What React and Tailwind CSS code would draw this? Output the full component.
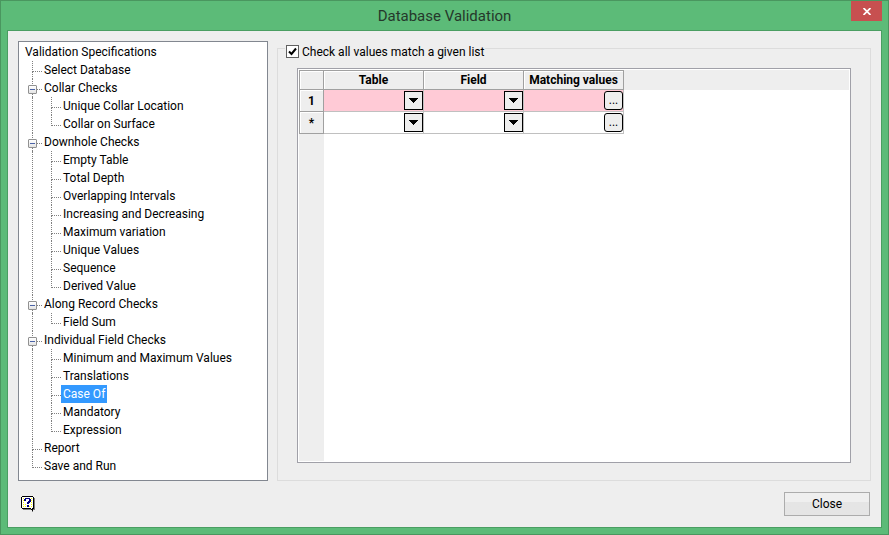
import React, { useState } from 'react';

const TREE = [
  { label: 'Select Database' },
  { label: 'Collar Checks', children: ['Unique Collar Location', 'Collar on Surface'] },
  {
    label: 'Downhole Checks',
    children: [
      'Empty Table',
      'Total Depth',
      'Overlapping Intervals',
      'Increasing and Decreasing',
      'Maximum variation',
      'Unique Values',
      'Sequence',
      'Derived Value',
    ],
  },
  { label: 'Along Record Checks', children: ['Field Sum'] },
  {
    label: 'Individual Field Checks',
    children: [
      'Minimum and Maximum Values',
      'Translations',
      'Case Of',
      'Mandatory',
      'Expression',
    ],
  },
  { label: 'Report' },
  { label: 'Save and Run' },
];

const ROWS = [
  { id: '1', required: true },
  { id: '*', required: false },
];

// Dotted elbow that joins a row to the line of its parent
function Branch({ last, children }) {
  return (
    <span className="relative flex w-[17px] shrink-0 flex-col pl-[7px]">
      <span className="h-[11px] border-b border-l border-dotted border-[#808080]" />
      <span className={`flex-1 ${last ? '' : 'border-l border-dotted border-[#808080]'}`} />
      {children}
    </span>
  );
}

function Toggle({ label, onClick }) {
  return (
    <button
      type="button"
      aria-label={`Toggle ${label}`}
      onClick={onClick}
      className="absolute left-[3px] top-[6px] flex h-[9px] w-[9px] items-center justify-center rounded-[1px] border border-[#919191] bg-linear-to-b from-white to-[#e4e4e4]"
    >
      <span className="h-px w-[5px] bg-[#4b63a7]" />
    </button>
  );
}

function Label({ text, selected, onSelect }) {
  return (
    <button
      type="button"
      onClick={() => onSelect(text)}
      className={`h-[18px] whitespace-nowrap px-[2px] leading-[18px] ${selected === text ? 'bg-[#3399ff] text-white' : ''}`}
    >
      {text}
    </button>
  );
}

function SpecTree() {
  const [selected, setSelected] = useState('Case Of');
  const [closed, setClosed] = useState({});

  return (
    <nav className="w-[250px] shrink-0 border border-[#828790] bg-white pb-1 pl-[6px] pt-px">
      <div className="h-[18px] leading-[18px]">Validation Specifications</div>
      <ul>
        {TREE.map((node, i) => (
          <li key={node.label}>
            <div className="flex h-[18px]">
              <Branch last={i === TREE.length - 1}>
                {node.children && (
                  <Toggle
                    label={node.label}
                    onClick={() => setClosed(prev => ({ ...prev, [node.label]: !prev[node.label] }))}
                  />
                )}
              </Branch>
              <Label text={node.label} selected={selected} onSelect={setSelected} />
            </div>
            {node.children && !closed[node.label] && (
              <ul className="ml-[7px] border-l border-dotted border-[#808080] pl-[11px]">
                {node.children.map((child, j) => (
                  <li key={child} className="flex h-[18px]">
                    <Branch last={j === node.children.length - 1} />
                    <Label text={child} selected={selected} onSelect={setSelected} />
                  </li>
                ))}
              </ul>
            )}
          </li>
        ))}
      </ul>
    </nav>
  );
}

function DropCell({ label }) {
  return (
    <div className="relative h-[21px]">
      <select aria-label={label} className="h-full w-full appearance-none bg-transparent px-1">
        <option></option>
      </select>
      <span className="pointer-events-none absolute right-0 top-px flex h-[19px] w-[19px] items-center justify-center border border-black bg-[#eeeeee]">
        <svg width="9" height="5" viewBox="0 0 9 5" shapeRendering="crispEdges">
          <path d="M0 0h9v1h-1v1h-1v1h-1v1h-1v1h-1v-1h-1v-1h-1v-1h-1v-1h-1z" />
        </svg>
      </span>
    </div>
  );
}

const HEAD = 'h-[20px] border-b border-r border-t border-[#a0a0a0] bg-[#eeeeee] font-bold leading-[18px] shadow-[inset_1px_1px_0_#ffffff]';
const CELL = 'h-[22px] border-b border-r border-[#c0c0c0]';

function ValuesGrid() {
  return (
    <div className="flex flex-1 border border-[#a0a0a8] bg-white p-px">
      <table className="w-full table-fixed border-separate border-spacing-0">
        <colgroup>
          <col className="w-[25px]" />
          <col className="w-[100px]" />
          <col className="w-[100px]" />
          <col className="w-[100px]" />
          <col />
        </colgroup>
        <thead>
          <tr>
            <th className={`${HEAD} border-l`} />
            <th className={HEAD}>Table</th>
            <th className={HEAD}>Field</th>
            <th className={`${HEAD} whitespace-nowrap`}>Matching values</th>
            <td className="bg-[#eeeeee]" />
          </tr>
        </thead>
        <tbody>
          {ROWS.map(row => (
            <tr key={row.id} className={row.required ? 'bg-[#ffcad6]' : 'bg-white'}>
              <th className="h-[22px] border-b border-l border-r border-[#a0a0a0] bg-[#eeeeee] font-bold shadow-[inset_1px_1px_0_#ffffff]">
                {row.id}
              </th>
              <td className={CELL}>
                <DropCell label={`Table ${row.id}`} />
              </td>
              <td className={CELL}>
                <DropCell label={`Field ${row.id}`} />
              </td>
              <td className={CELL}>
                <div className="flex h-[21px] items-center">
                  <input
                    type="text"
                    aria-label={`Matching values ${row.id}`}
                    className="min-w-0 flex-1 bg-transparent px-1 outline-none"
                  />
                  <button
                    type="button"
                    aria-label="Edit matching values"
                    className="h-[19px] w-[19px] rounded-[3px] border border-black bg-[#eeeeee] leading-[17px]"
                  >
                    ...
                  </button>
                </div>
              </td>
              <td className="bg-white" />
            </tr>
          ))}
          {/* empty space below the rows keeps the row header strip */}
          <tr className="h-full">
            <td className="bg-[#eeeeee]" />
            <td colSpan={4} />
          </tr>
        </tbody>
      </table>
    </div>
  );
}

function HelpIcon() {
  return (
    <svg width="14" height="16" viewBox="0 0 14 16" shapeRendering="crispEdges">
      <path d="M13 2h1v12h-2v2h-1v-2H2v-1h11z" fill="#808080" />
      <path d="M1 0h11v1h1v12h-1v2h-1v-1h-1v-1H1v-1H0V1h1z" fill="#000" />
      <path d="M1 1h11v11h-1v1h-1v-1H1z" fill="#fff" />
      <path
        d="M2 2h1v1H2zM2 4h1v1H2zM2 6h1v1H2zM2 8h1v1H2zM2 10h1v1H2zM10 2h1v1h-1zM10 4h1v1h-1zM10 6h1v1h-1zM10 8h1v1h-1zM10 10h1v1h-1zM4 8h1v1H4zM4 10h1v1H4zM8 10h1v1H8z"
        fill="#ffff00"
      />
      <path d="M4 2h5v1h1v3h-1v1H8v1H6V6h1V5h1V3H5v2H3V3h1zM6 9h2v2H6z" fill="#000080" />
    </svg>
  );
}

export default function App() {
  const [checked, setChecked] = useState(true);

  return (
    <div className="flex min-h-screen flex-col border border-[#4a965f] bg-[#5cbb78] px-[6px] pb-[6px] font-['Roboto','Open_Sans',sans-serif] text-[12px] text-black">
      <header className="relative flex h-[29px] items-center justify-center">
        <h1 className="text-[15px] leading-[20px] text-[#25382b]">Database Validation</h1>
        <button
          type="button"
          aria-label="Close window"
          className="absolute right-0 top-0 flex h-[20px] w-[31px] items-center justify-center bg-[#c75050]"
        >
          <svg width="8" height="7" viewBox="0 0 8 7">
            <path d="M.5 0 7.500 7M7.500 0 .5 7" stroke="#fff" strokeWidth="1.700" />
          </svg>
        </button>
      </header>

      <main className="flex flex-1 flex-col border border-[#4a9e62] bg-[#eeeeee] px-[10px] pb-[11px] pt-[10px]">
        <div className="flex flex-1 gap-[9px]">
          <SpecTree />
          <fieldset className="flex min-w-0 flex-1 flex-col border border-[#dcdcdc] px-[19px] pb-[17px] pt-3">
            <legend className="-ml-3 h-[15px] px-px pt-[6px]">
              <label className="flex h-[9px] items-center gap-[3px]">
                <input
                  type="checkbox"
                  checked={checked}
                  onChange={e => setChecked(e.target.checked)}
                  className="peer h-[13px] w-[13px] appearance-none border border-[#606060] bg-white"
                />
                <svg
                  width="9"
                  height="9"
                  viewBox="0 0 9 9"
                  className="pointer-events-none invisible absolute ml-[2px] peer-checked:visible"
                >
                  <path d="M1 4.500 3.500 7 8 1.500" fill="none" stroke="#000" strokeWidth="2" />
                </svg>
                Check all values match a given list
              </label>
            </legend>
            <ValuesGrid />
          </fieldset>
        </div>
        <footer className="flex items-center justify-between pl-[3px] pr-px pt-[11px]">
          <button type="button" aria-label="Help">
            <HelpIcon />
          </button>
          <button
            type="button"
            className="h-[24px] w-[86px] border border-[#acacac] bg-linear-to-b from-[#efefef] from-40% to-[#e5e5e5] to-40%"
          >
            Close
          </button>
        </footer>
      </main>
    </div>
  );
}
